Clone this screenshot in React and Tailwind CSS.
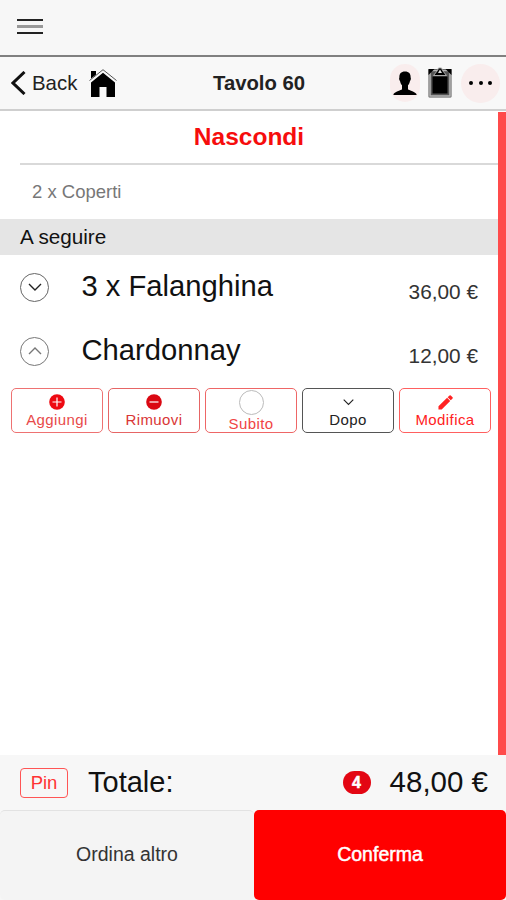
import React from "react";

const Chevron = ({ className, up }) => (
  <svg className={className} viewBox="0 0 16 10" fill="none" stroke="currentColor">
    <path d={up ? "M2 8l6-6 6 6" : "M2 2l6 6 6-6"} strokeWidth="1.4" />
  </svg>
);

const HomeIcon = () => (
  <svg className="w-7 h-7" viewBox="0 0 28 28">
    <path d="M2 2h5v5l-5 4z" />
    <path d="M14 3.8L26 13.500V28H17.500V18h-7v10H2V13.500z" />
    <path d="M.5 12.200L14 1.200l13.500 11" fill="none" stroke="#f7f7f7" strokeWidth="2" />
    <path d="M.5 11.500L14 .7l13.500 10.800" fill="none" stroke="#555" strokeWidth="1" />
  </svg>
);

const PersonIcon = () => (
  <svg className="w-6 h-6" viewBox="0 0 24 24">
    <path d="M12 0.500c4 0 5.800 2.300 5.600 5.800.6 1.500.2 2.800-.6 3.700-.4 2-1 3.200-2 4.200v4c1 1.300 6 1.600 8.500 4.800v1H.5v-1C3 19.800 8 19.500 9 18.200v-4c-1-1-1.600-2.200-2-4.200-.8-.9-1.200-2.200-.6-3.700C6.200 2.800 8 .5 12 .5z" />
  </svg>
);

const ClipboardIcon = () => (
  <svg className="w-6 h-[31px]" viewBox="0 0 24 31">
    <rect x="0.500" y="2" width="23" height="28.500" rx="1" fill="#555" />
    <rect x="2" y="3.500" width="20" height="25.500" fill="none" stroke="#b8b8b8" strokeWidth="1.500" />
    <path d="M.5 2h6L.5 8zM23.500 2h-6l6 6z" />
    <rect x="4.500" y="9.500" width="15" height="17" />
    <path d="M5.500 8.500L9.500 3.500 10.500 1h3l1 2.500 4 5z" stroke="#aaa" strokeWidth="1" />
    <path d="M10 6l2-3.500L14 6z" fill="#ddd" />
  </svg>
);

const Row = ({ name, price, up }) => (
  <div className="flex h-16 items-center pl-5 pr-[20px]">
    <div
      className={`flex w-[29px] h-[29px] items-center justify-center rounded-full border ${
        up ? "border-[#777] text-[#777]" : "border-[#666] text-[#222]"
      }`}
    >
      <Chevron className="w-4 h-2.5" up={up} />
    </div>
    <div className="ml-[32.500px] -mt-[2px] flex-1 text-[29.200px] leading-8">{name}</div>
    <div className="pt-[9px] text-[20.800px] text-[#333]">{price}</div>
  </div>
);

const ActionButton = ({ label, icon, className }) => (
  <div
    className={`flex h-[45px] w-[92px] flex-col items-center rounded-[5px] border text-[15px] leading-[18px] tracking-[0.4px] ${className}`}
  >
    {icon}
    <span>{label}</span>
  </div>
);

const RoundIcon = ({ plus, className }) => (
  <svg className={className} viewBox="0 0 16 16">
    <circle cx="8" cy="8" r="7.800" fill="currentColor" />
    <path d={plus ? "M3.500 8h9M8 3.500v9" : "M3.500 8h9"} stroke="#fff" strokeWidth="1.200" />
  </svg>
);

const PencilIcon = () => (
  <svg className="mt-[6px] mb-px h-[15px] w-[15px] shrink-0" viewBox="0 0 16 16" fill="currentColor">
    <path d="M.5 15.500v-3.400L9.700 3l3.300 3.300-9.100 9.200zM10.300 2.400L12.300.5q.7-.5 1.300.1l1.900 1.900q.6.7 0 1.300l-1.900 1.900z" />
  </svg>
);

export default function App() {
  return (
    <div
      className="flex h-[900px] w-[506px] flex-col overflow-hidden bg-white text-[#111]"
      style={{ fontFamily: '"Liberation Sans", Arial, sans-serif' }}
    >
      <div className="h-[57px] border-b-2 border-[#808080] bg-[#f7f7f7] pl-[17px] pt-[19px]">
        <div className="flex w-[26px] flex-col gap-1">
          <div className="h-0.5 bg-[#222]"></div>
          <div className="h-[3px] bg-[#999]"></div>
          <div className="h-0.5 bg-[#222]"></div>
        </div>
      </div>

      <div className="flex h-[54px] items-center border-b-2 border-[#cfcfcf] bg-[#f8f8f8] pl-[11px] pr-[6px]">
        <svg className="h-6 w-[15px]" viewBox="0 0 15 24" fill="none" stroke="#111" strokeWidth="3">
          <path d="M13.500 1L2 12l11.500 11" />
        </svg>
        <span className="ml-[6px] mt-px w-[51px] text-[20.400px] text-[#222]">Back</span>
        <div className="ml-[6px]">
          <HomeIcon />
        </div>
        <span className="ml-[96px] w-[177px] text-[20.300px] font-bold text-[#222]">Tavolo 60</span>
        <div className="flex h-[38px] w-[30px] items-center justify-center rounded-full bg-[#f9eded]">
          <PersonIcon />
        </div>
        <div className="ml-[8px] -mt-px">
          <ClipboardIcon />
        </div>
        <div className="ml-auto flex h-[39px] w-[39px] items-center justify-center gap-[5.500px] rounded-full bg-[#f9eded]">
          <div className="h-1 w-1 rounded-full bg-black"></div>
          <div className="h-1 w-1 rounded-full bg-black"></div>
          <div className="h-1 w-1 rounded-full bg-black"></div>
        </div>
      </div>

      <div className="flex h-[644px]">
        <div className="w-[498px]">
          <div className="ml-5 h-[54px] border-b-2 border-[#d9d9d9]">
            <div className="-ml-5 pt-[10px] text-center text-[24.500px] leading-8 font-bold text-[#f60d0d]">
              Nascondi
            </div>
          </div>
          <div className="h-[54px] pl-8 text-[18.500px] leading-[53px] text-[#777]">2 x Coperti</div>
          <div className="h-[36px] bg-[#e5e5e5] pl-5 text-[20.700px] leading-[36px]">A seguire</div>
          <Row name="3 x Falanghina" price="36,00 €" />
          <Row name="Chardonnay" price="12,00 €" up />
          <div className="flex gap-[5px] pl-[11px] pt-[5px]">
            <ActionButton
              label="Aggiungi"
              className="border-[#ee7272] text-[#e84a4a]"
              icon={<RoundIcon plus className="mt-[5px] mb-px h-4 w-4 shrink-0 text-[#ee0a12]" />}
            />
            <ActionButton
              label="Rimuovi"
              className="border-[#e66565] text-[#d93636]"
              icon={<RoundIcon className="mt-[5px] mb-px h-4 w-4 shrink-0 text-[#da0812]" />}
            />
            <ActionButton
              label="Subito"
              className="border-[#ee6666] text-[#f04444]"
              icon={<div className="mt-px h-[25px] w-[25px] shrink-0 rounded-full border border-[#bbb]"></div>}
            />
            <ActionButton
              label="Dopo"
              className="border-[#555] text-[#222]"
              icon={<Chevron className="mt-[9px] mb-[5px] h-2 w-[13px] shrink-0" />}
            />
            <ActionButton
              label="Modifica"
              className="border-[#ff6060] text-[#ff2222]"
              icon={<PencilIcon />}
            />
          </div>
        </div>
        <div className="mt-px w-2 bg-[#ff4b4b]"></div>
      </div>

      <div className="flex h-[55px] items-center bg-[#f7f7f7] pl-5 pr-[18px]">
        <div className="flex h-[30px] w-12 items-center justify-center rounded-[4px] border border-[#ff5555] text-[18.500px] text-[#ff3333]">
          Pin
        </div>
        <span className="ml-5 flex-1 text-[29px]">Totale:</span>
        <div className="mr-[19px] flex h-[23px] w-[28px] items-center justify-center rounded-full bg-[#e30613] text-[16px] font-bold text-white [-webkit-text-stroke:0.5px_white]">
          4
        </div>
        <span className="text-[29.500px]">48,00 €</span>
      </div>

      <div className="flex h-[90px] bg-[#f7f7f7]">
        <div className="flex w-[254px] items-center justify-center rounded-[5px] border-t border-[#e2e2e2] bg-[#f4f4f4] pb-px text-[19.500px] text-[#333]">
          Ordina altro
        </div>
        <div className="flex w-[252px] items-center justify-center rounded-[5px] bg-[#ff0000] text-[19.500px] text-white [-webkit-text-stroke:0.5px_white]">
          Conferma
        </div>
      </div>
    </div>
  );
}
